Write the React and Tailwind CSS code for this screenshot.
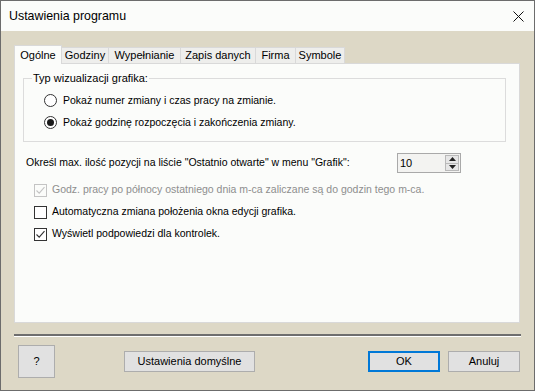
import React from 'react';

const font = { fontFamily: '"Liberation Sans", Arial, sans-serif' };

const tabs = [
  { label: 'Ogólne', w: 'w-[48px]', active: true },
  { label: 'Godziny', w: 'w-[48px]' },
  { label: 'Wypełnianie', w: 'w-[73px]' },
  { label: 'Zapis danych', w: 'w-[76px]' },
  { label: 'Firma', w: 'w-[41px]' },
  { label: 'Symbole', w: 'w-[50px]' },
];

const Radio = ({ checked, children }) => (
  <div className="flex items-center h-[22px]">
    <span className="w-[13px] h-[13px] rounded-full border border-[#333] bg-white flex items-center justify-center">
      {checked && <span className="w-[7px] h-[7px] rounded-full bg-[#1a1a1a]" />}
    </span>
    <span className="ml-[6px]">{children}</span>
  </div>
);

const Check = ({ checked, disabled, children }) => (
  <div className={`flex items-center h-[22px] ${disabled ? 'text-[#8e8e8e]' : ''}`}>
    <span
      className={`w-[13px] h-[13px] border flex items-center justify-center ${
        disabled ? 'border-[#c4c4c4]' : 'border-[#333] bg-white'
      }`}
    >
      {checked && (
        <svg width="11" height="11" viewBox="0 0 11 11">
          <path d="M1.5 5.5 L4.2 8.2 L9.5 2.2" fill="none" stroke={disabled ? '#c4c4c4' : '#333'} strokeWidth="1.1" />
        </svg>
      )}
    </span>
    <span className="ml-[5px]">{children}</span>
  </div>
);

const Button = ({ children, className = '' }) => (
  <button className={`h-[21px] bg-[#e1e1e1] border border-[#adadad] text-[11px] text-black flex items-center justify-center ${className}`}>
    {children}
  </button>
);

const App = () => {
  return (
    <div className="w-[535px] h-[391px] border border-[#6c6c6c] flex flex-col text-[10.5px] text-black" style={font}>
      {/* title bar */}
      <div className="h-[30px] bg-[#fbfcfa] flex items-center justify-between pl-[8px] pr-[10px]">
        <span className="text-[12.4px]">Ustawienia programu</span>
        <svg width="11" height="11" viewBox="0 0 11 11">
          <path d="M0.5 0.5 L10.5 10.5 M10.5 0.5 L0.5 10.5" stroke="#111" strokeWidth="1" />
        </svg>
      </div>

      <div className="flex-1 bg-[#ddd8c6] flex flex-col pt-[14px] px-[13px]">
        {/* tabs */}
        <div className="flex items-end h-[18px] relative z-10 text-[11px]">
          {tabs.map((t) => (
            <div
              key={t.label}
              className={`${t.w} flex items-center justify-center border border-[#d9d9d9] ${
                t.active ? 'h-[19px] bg-[#fbfcfa] border-b-0 -mb-px' : 'h-[16px] bg-[#eeeeec] border-b-0 -ml-px first:ml-0'
              }`}
            >
              {t.label}
            </div>
          ))}
        </div>

        {/* panel */}
        <div className="w-[506px] h-[260px] bg-[#fbfcfa] border border-[#d9d9d9] pt-[6px] pl-[8px] flex flex-col">
          <fieldset className="w-[483px] h-[72px] border border-[#dcdcdc] pl-[20px] pt-[3px]">
            <legend className="ml-[-12px] px-[1px] text-[11px]">Typ wizualizacji grafika:</legend>
            <Radio>Pokaż numer zmiany i czas pracy na zmianie.</Radio>
            <Radio checked>Pokaż godzinę rozpoczęcia i zakończenia zmiany.</Radio>
          </fieldset>

          <div className="pl-[3px] mt-[11px] flex items-center h-[20px]">
            <span className="w-[371px]">
              Określ max. ilość pozycji na liście "Ostatnio otwarte" w menu "Grafik":
            </span>
            <div className="w-[64px] h-[20px] border border-[#a9a9a9] bg-[#f3f3f1] flex items-center justify-between pl-[2px] pr-[1px] text-[11px]">
              <span>10</span>
              <div className="w-[14px] h-[16px] flex flex-col">
                <div className="flex-1 bg-[#e6e6e6] border border-[#b9b9b9] flex items-center justify-center">
                  <svg width="7" height="4" viewBox="0 0 7 4"><path d="M3.5 0 L7 4 L0 4 Z" fill="#222" /></svg>
                </div>
                <div className="flex-1 bg-[#e6e6e6] border border-t-0 border-[#b9b9b9] flex items-center justify-center">
                  <svg width="7" height="4" viewBox="0 0 7 4"><path d="M0 0 L7 0 L3.5 4 Z" fill="#222" /></svg>
                </div>
              </div>
            </div>
          </div>

          <div className="pl-[11px] mt-[6px] flex flex-col">
            <Check checked disabled>
              Godz. pracy po północy ostatniego dnia m-ca zaliczane są do godzin tego m-ca.
            </Check>
            <Check>Automatyczna zmiana położenia okna edycji grafika.</Check>
            <Check checked>Wyświetl podpowiedzi dla kontrolek.</Check>
          </div>
        </div>

        {/* separator */}
        <div className="mt-[11px] w-[507px] border-t-2 border-[#6e6e6e] border-b border-b-white" />

        {/* buttons */}
        <div className="mt-[8px] flex items-center">
          <Button className="ml-[4px] w-[37px] !h-[33px]">?</Button>
          <Button className="ml-[69px] w-[131px]">Ustawienia domyślne</Button>
          <Button className="ml-[113px] w-[72px] border-2 !border-[#0078d7]">OK</Button>
          <Button className="ml-[8px] w-[72px]">Anuluj</Button>
        </div>
      </div>
    </div>
  );
};

export default App;
